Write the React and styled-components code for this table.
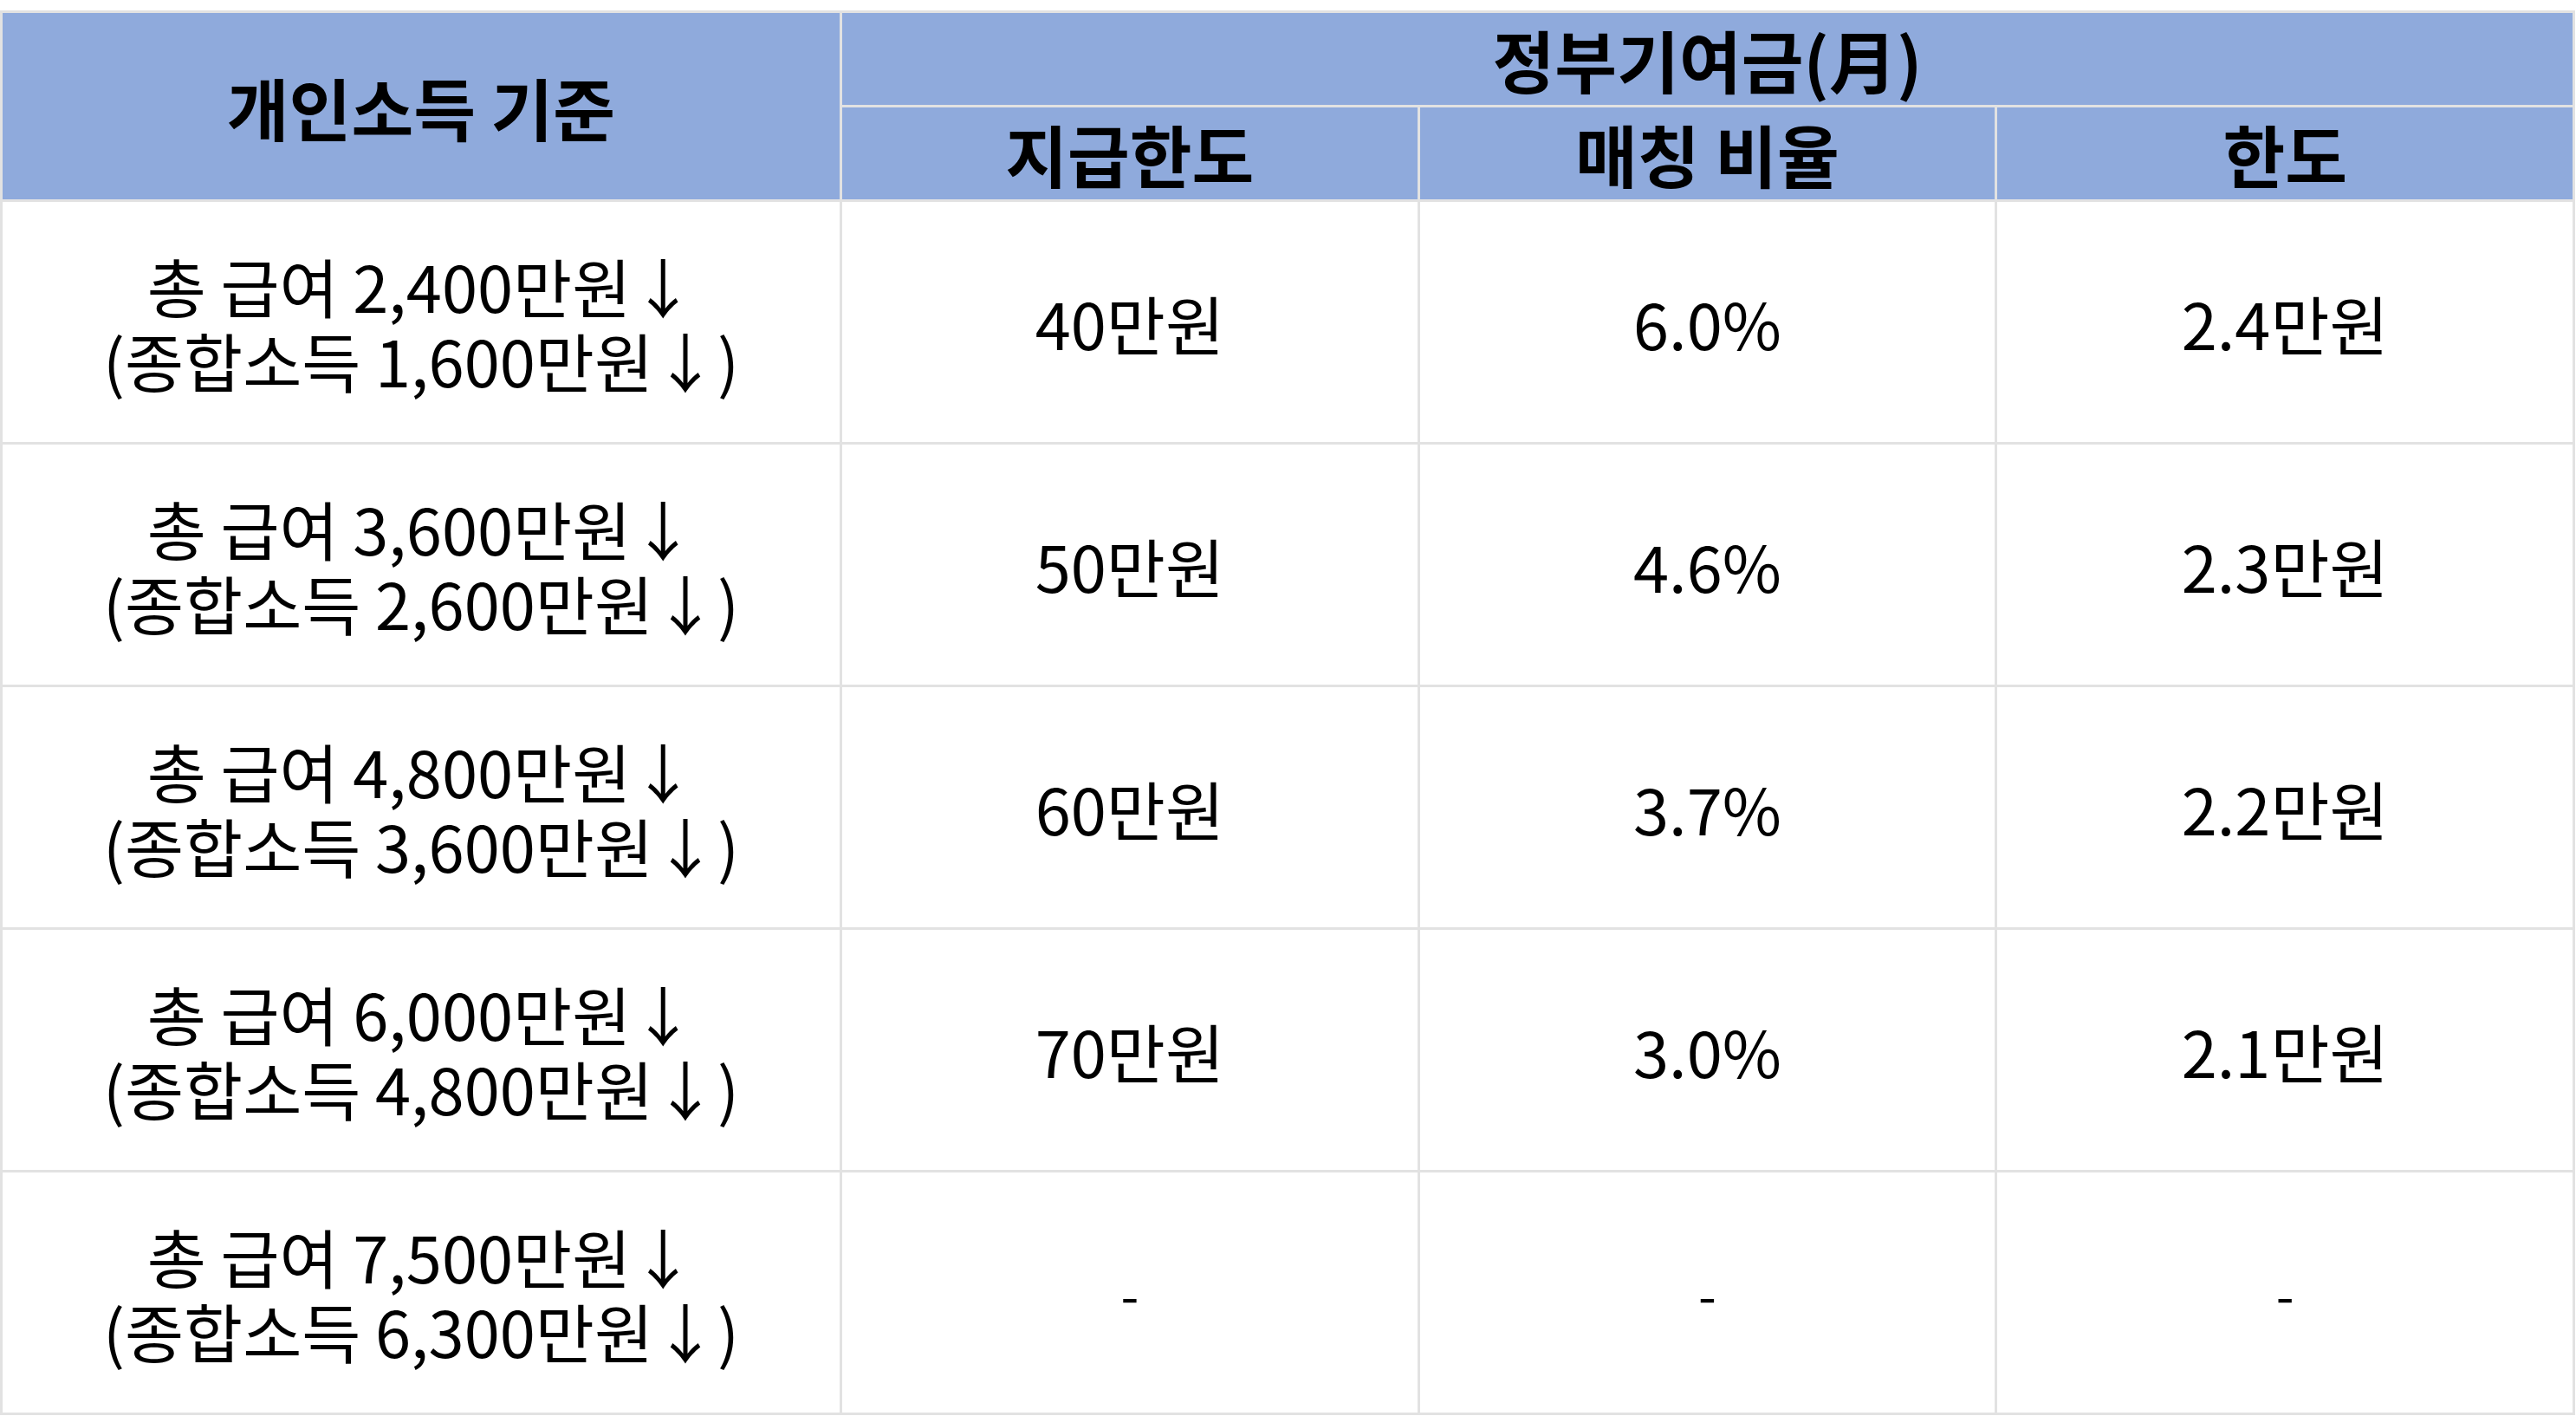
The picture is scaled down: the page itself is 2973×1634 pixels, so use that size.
import React from "react";
import styled, { createGlobalStyle } from "styled-components";

const GlobalStyle = createGlobalStyle`
  html, body {
    margin: 0;
    padding: 0;
    background: #ffffff;
  }
  body {
    font-family: "Noto Sans CJK KR", "Noto Sans", sans-serif;
    color: #000000;
  }
`;

const rows = [
  { pay: "2,400", total: "1,600", limit: "40만원", rate: "6.0%", cap: "2.4만원" },
  { pay: "3,600", total: "2,600", limit: "50만원", rate: "4.6%", cap: "2.3만원" },
  { pay: "4,800", total: "3,600", limit: "60만원", rate: "3.7%", cap: "2.2만원" },
  { pay: "6,000", total: "4,800", limit: "70만원", rate: "3.0%", cap: "2.1만원" },
  { pay: "7,500", total: "6,300", limit: "-", rate: "-", cap: "-" },
];

const Table = styled.div`
  margin-top: 12px;
  width: 2972px;
  box-sizing: border-box;
  display: grid;
  grid-template-columns: 966px repeat(3, 1fr);
  grid-template-rows: 106px 106px repeat(5, 277px);
  gap: 3px;
  padding: 3px;
  background: #e2e2e2;
`;

const HeadCell = styled.div`
  background: #8faadc;
  display: flex;
  align-items: center;
  justify-content: center;
  font-weight: 700;
  font-size: 78px;
  line-height: 1;
  white-space: nowrap;
  grid-column: ${(p) => p.$col || "auto"};
  grid-row: ${(p) => p.$row || "auto"};
`;

const Cell = styled.div`
  background: #ffffff;
  display: flex;
  flex-direction: column;
  align-items: center;
  justify-content: center;
  font-size: 74px;
  line-height: 86px;
  white-space: nowrap;
`;

const Line = styled.span`
  display: block;
`;

const Dash = styled.span`
  display: block;
  font-size: 60px;
`;

export default function App() {
  return (
    <>
      <GlobalStyle />
      <Table>
        <HeadCell $col="1" $row="1 / span 2">개인소득 기준</HeadCell>
        <HeadCell $col="2 / span 3" $row="1">정부기여금(月)</HeadCell>
        <HeadCell>지급한도</HeadCell>
        <HeadCell>매칭 비율</HeadCell>
        <HeadCell>한도</HeadCell>
        {rows.map((r) => (
          <React.Fragment key={r.pay}>
            <Cell>
              <Line>총 급여 {r.pay}만원↓</Line>
              <Line>(종합소득 {r.total}만원↓)</Line>
            </Cell>
            {[r.limit, r.rate, r.cap].map((v, i) => (
              <Cell key={i}>{v === "-" ? <Dash>-</Dash> : <Line>{v}</Line>}</Cell>
            ))}
          </React.Fragment>
        ))}
      </Table>
    </>
  );
}
